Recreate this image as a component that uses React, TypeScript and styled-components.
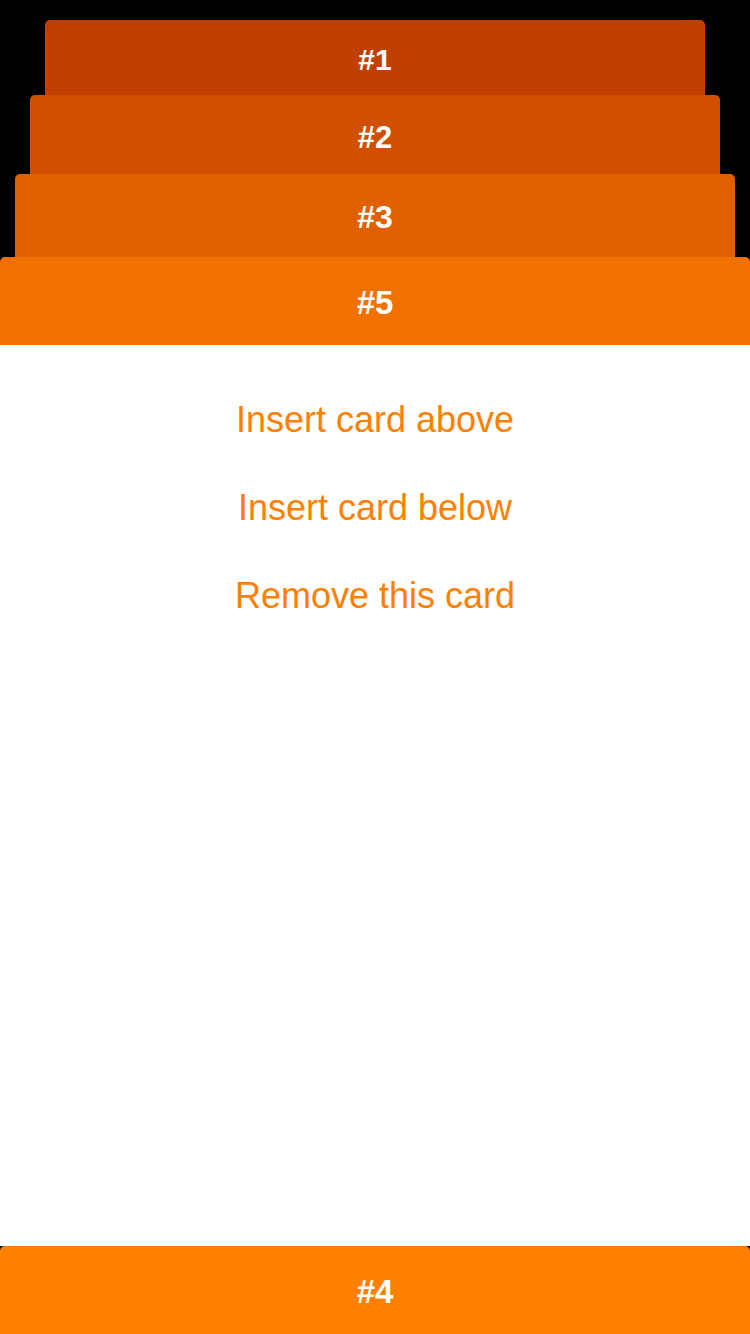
import { createGlobalStyle, styled } from "styled-components";

const GlobalStyle = createGlobalStyle`
  html, body {
    margin: 0;
    padding: 0;
    background: #000000;
  }
  body {
    font-family: "Liberation Sans", Arial, Helvetica, sans-serif;
  }
`;

type StackCard = {
  label: string;
  color: string;
  width: number;
  height: number;
  offset: number;
  size: number;
};

// cards further back are narrower and shorter, like a deck seen in perspective
const stack: StackCard[] = [
  { label: "#1", color: "#c04000", width: 660, height: 75, offset: 40, size: 30 },
  { label: "#2", color: "#d05000", width: 690, height: 79, offset: 42, size: 31 },
  { label: "#3", color: "#e06000", width: 720, height: 83, offset: 43, size: 32 },
  { label: "#5", color: "#f07000", width: 750, height: 88, offset: 45, size: 33 },
];

const actions = ["Insert card above", "Insert card below", "Remove this card"];

const App = () => {
  return (
    <>
      <GlobalStyle />
      <Screen>
        <Stack>
          {stack.map((card) => (
            <Card
              key={card.label}
              $color={card.color}
              $width={card.width}
              $height={card.height}
            >
              <CardLabel $offset={card.offset} $size={card.size}>
                {card.label}
              </CardLabel>
            </Card>
          ))}
        </Stack>
        <Sheet>
          {actions.map((action) => (
            <ActionButton key={action}>{action}</ActionButton>
          ))}
        </Sheet>
        <Card $color="#ff8000" $width={750} $height={88}>
          <CardLabel $offset={45} $size={33}>
            #4
          </CardLabel>
        </Card>
      </Screen>
    </>
  );
};
export default App;

const Screen = styled.div`
  display: flex;
  flex-direction: column;
  width: 750px;
  height: 1334px;
  background: #000000;
  overflow: hidden;
`;

const Stack = styled.div`
  display: flex;
  flex-direction: column;
  align-items: center;
  padding-top: 20px;
  background: #000000;
`;

const Card = styled.div<{ $color: string; $width: number; $height: number }>`
  display: flex;
  justify-content: center;
  flex-shrink: 0;
  width: ${(p) => p.$width}px;
  height: ${(p) => p.$height}px;
  margin: 0 auto;
  background: ${(p) => p.$color};
  border-radius: 5px 5px 0 0;
`;

const CardLabel = styled.div<{ $offset: number; $size: number }>`
  margin-top: ${(p) => p.$offset - p.$size / 2}px;
  height: ${(p) => p.$size}px;
  line-height: ${(p) => p.$size}px;
  font-size: ${(p) => p.$size}px;
  font-weight: 700;
  color: #ffffff;
`;

const Sheet = styled.div`
  display: flex;
  flex-direction: column;
  align-items: center;
  flex: 1;
  padding-top: 31px;
  background: #ffffff;
`;

const ActionButton = styled.button`
  height: 88px;
  padding: 0;
  border: none;
  background: transparent;
  font-family: "Liberation Sans", Arial, Helvetica, sans-serif;
  font-size: 36px;
  font-weight: 400;
  color: #ff8000;
  cursor: pointer;
`;
